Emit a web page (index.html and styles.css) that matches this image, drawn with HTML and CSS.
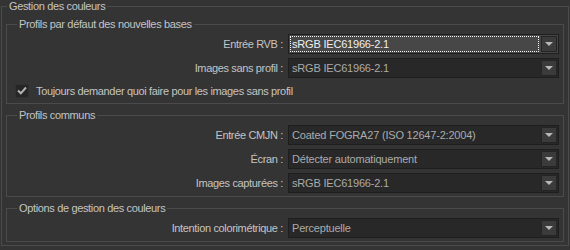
FILE: index.html
```html
<!DOCTYPE html>
<html lang="fr">
<head>
    <meta charset="UTF-8">
    <title>Gestion des couleurs</title>
    <link rel="stylesheet" href="styles.css">
</head>
<body>
    <fieldset class="group">
        <legend>Gestion des couleurs</legend>

        <!-- Profils par défaut -->
        <fieldset class="section first">
            <legend>Profils par défaut des nouvelles bases</legend>
            <div class="row">
                <span class="label">Entrée RVB :</span>
                <div class="combo focused"><span class="value">sRGB IEC61966-2.1</span><span class="btn"></span></div>
            </div>
            <div class="row">
                <span class="label">Images sans profil :</span>
                <div class="combo"><span class="value">sRGB IEC61966-2.1</span><span class="btn"></span></div>
            </div>
            <div class="check">
                <span class="box">
                    <svg width="10" height="9" viewBox="0 0 10 9"><path d="M1 4.5 L3.8 7.3 L9 1.5" fill="none" stroke="#b4b4b4" stroke-width="2"/></svg>
                </span>
                <span>Toujours demander quoi faire pour les images sans profil</span>
            </div>
        </fieldset>

        <!-- Profils communs -->
        <fieldset class="section">
            <legend>Profils communs</legend>
            <div class="row">
                <span class="label">Entrée CMJN :</span>
                <div class="combo"><span class="value">Coated FOGRA27 (ISO 12647-2:2004)</span><span class="btn"></span></div>
            </div>
            <div class="row">
                <span class="label">Écran :</span>
                <div class="combo"><span class="value">Détecter automatiquement</span><span class="btn"></span></div>
            </div>
            <div class="row">
                <span class="label">Images capturées :</span>
                <div class="combo"><span class="value">sRGB IEC61966-2.1</span><span class="btn"></span></div>
            </div>
        </fieldset>

        <!-- Options -->
        <fieldset class="section last">
            <legend>Options de gestion des couleurs</legend>
            <div class="row">
                <span class="label">Intention colorimétrique :</span>
                <div class="combo"><span class="value">Perceptuelle</span><span class="btn"></span></div>
            </div>
        </fieldset>
    </fieldset>
</body>
</html>
```

FILE: styles.css
```css
body {
    margin: 0;
    height: 250px;
    overflow: hidden;
    background: #343434;
    font-family: "Liberation Sans", Arial, sans-serif;
    font-size: 11px;
    letter-spacing: -0.35px;
    color: #c4c4c4;
}

fieldset {
    min-width: 0;
    border: 1px solid #4b4b4b;
}

legend {
    padding: 0 2px;
    line-height: 13px;
    margin-left: 1px;
}

.group {
    margin: 0 1px;
    padding: 5px 4px 3px 4px;
}

.section {
    margin: 5px 0 0 0;
    padding: 3px 4px 3px 4px;
    display: flex;
    flex-direction: column;
    gap: 4px;
}

.section.first {
    margin-top: 0;
    padding-bottom: 4px;
}

.section legend {
    margin-left: 6px;
}

.row {
    display: grid;
    grid-template-columns: 1fr 271px;
    column-gap: 5px;
    align-items: center;
}

.label {
    text-align: right;
}

.combo {
    height: 20px;
    box-sizing: border-box;
    border: 1px solid #1e1e1e;
    background: #282828;
    display: flex;
    align-items: center;
    padding: 1px 1px 1px 2px;
}

.combo .value {
    flex: 1;
    padding: 0 1px;
    line-height: 14px;
    color: #ababab;
    letter-spacing: -0.2px;
}

.combo.focused {
    background: #474747;
}

.combo.focused .value {
    color: #f0f0f0;
    outline: 1px dotted #f4f4f4;
    margin-right: 3px;
}

.btn {
    width: 16px;
    height: 16px;
    box-sizing: border-box;
    border: 1px solid #242424;
    background: #3b3b3b;
    display: flex;
    align-items: center;
    justify-content: center;
}

.btn::after {
    content: "";
    border-left: 4px solid transparent;
    border-right: 4px solid transparent;
    border-top: 4px solid #b8b8b8;
}

.check {
    display: flex;
    align-items: center;
    gap: 7px;
    height: 17px;
    padding-left: 4px;
}

.box {
    width: 12px;
    height: 12px;
    background: #262626;
    border: 1px solid #303030;
    display: flex;
    align-items: center;
    justify-content: center;
}
```
